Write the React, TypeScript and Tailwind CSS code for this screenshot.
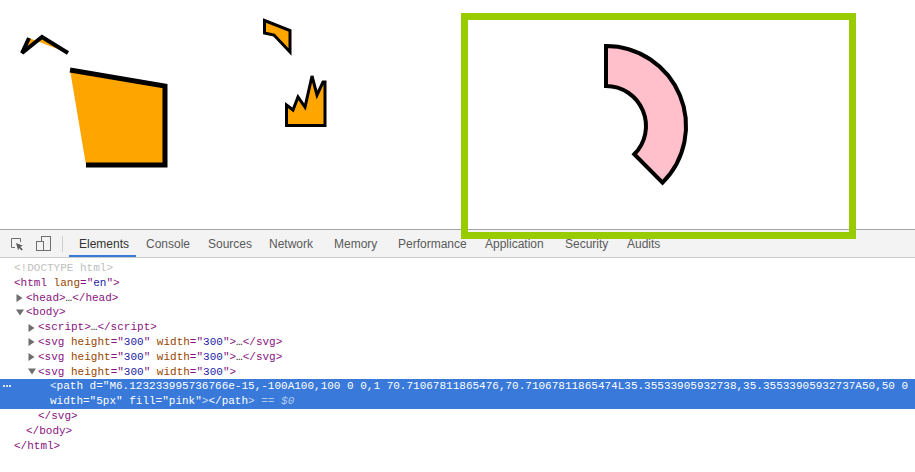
import React from "react";

const Tg = ({ c }: { c: string }) => <span className="text-[#881280]">{c}</span>;
const An = ({ c }: { c: string }) => <span className="text-[#994500]">{c}</span>;
const Av = ({ c }: { c: string }) => <span className="text-[#1a1aa6]">{c}</span>;
const Ell = () => <span className="text-[#222]">…</span>;

const ArrowRight = () => (
  <span className="inline-flex w-[10px] h-[14.8px] items-center">
    <svg width="7" height="8" viewBox="0 0 7 8">
      <path d="M0.5 0 L6.5 4 L0.5 8 Z" fill="#6e6e6e" />
    </svg>
  </span>
);
const ArrowDown = () => (
  <span className="inline-flex w-[10px] h-[14.8px] items-center">
    <svg width="8" height="7" viewBox="0 0 8 7">
      <path d="M0 0.5 L8 0.5 L4 6.5 Z" fill="#6e6e6e" />
    </svg>
  </span>
);

const SvgOpen = () => (
  <>
    <Tg c="<svg" />
    <An c=" height" />
    <Tg c='="' />
    <Av c="300" />
    <Tg c='"' />
    <An c=" width" />
    <Tg c='="' />
    <Av c="300" />
    <Tg c='">' />
  </>
);

const tabs: { name: string; w: string; active?: boolean }[] = [
  { name: "Elements", w: "w-[67px]", active: true },
  { name: "Console", w: "w-[62px]" },
  { name: "Sources", w: "w-[61px]" },
  { name: "Network", w: "w-[65px]" },
  { name: "Memory", w: "w-[64px]" },
  { name: "Performance", w: "w-[87px]" },
  { name: "Application", w: "w-[80px]" },
  { name: "Security", w: "w-[62px]" },
  { name: "Audits", w: "w-[57px]" },
];

export default function App() {
  return (
    <div className="relative w-[915px] h-[472px] bg-white overflow-hidden flex flex-col">
      {/* page canvas */}
      <div className="relative h-[229px] shrink-0">
        <svg
          className="absolute left-0 top-0 z-10 overflow-visible"
          width="915"
          height="245"
          viewBox="0 0 915 245"
        >
          <path
            d="M29,38 L22,53 L42,37 L68,53"
            fill="orange"
            stroke="black"
            strokeWidth="4"
          />
          <path
            d="M70,70 L165,86 L165,165 L86,165"
            fill="orange"
            stroke="black"
            strokeWidth="5"
          />
          <path
            d="M264.5,20.5 L290,30.5 L290,52 L274,35 L264.5,33 Z"
            fill="orange"
            stroke="black"
            strokeWidth="3"
          />
          <path
            d="M286.5,105 L293,110 L298,97 L305,107 L312,76 L317,95 L323,82 L325,82 L325,125.5 L286.5,125.5 Z"
            fill="orange"
            stroke="black"
            strokeWidth="3"
          />
          <rect
            x="464.5"
            y="16.5"
            width="388"
            height="219"
            fill="none"
            stroke="#99cc00"
            strokeWidth="7"
          />
          <path
            d="M606,46 A80,80 0 0,1 662.57,182.57 L634.28,154.28 A40,40 0 0,0 606,86 Z"
            fill="pink"
            stroke="black"
            strokeWidth="4"
          />
        </svg>
      </div>

      {/* devtools */}
      <div className="flex-1 flex flex-col border-t border-[#a3a3a3]">
        <div className="h-[28px] shrink-0 flex items-stretch bg-[#f3f3f3] border-b border-[#cbcbcb] font-['Liberation_Sans',Arial,sans-serif] text-[12px]">
          <div className="flex items-center pl-[10px]">
            <svg width="14" height="14" viewBox="0 0 14 14">
              <path d="M5 10.5 H1.5 V1.5 H10.5 V5" fill="none" stroke="#6e6e6e" strokeWidth="1" />
              <path d="M6 6 L13 8.8 L10.2 9.8 L12.8 12.4 L11.6 13.6 L9 11 L8.2 13.6 Z" fill="#5a5a5a" />
            </svg>
            <svg className="ml-[12px]" width="15" height="15" viewBox="0 0 15 15">
              <rect x="5.5" y="0.5" width="9" height="14" fill="none" stroke="#6e6e6e" strokeWidth="1" />
              <rect x="0.5" y="5.5" width="7" height="9" fill="#f3f3f3" stroke="#6e6e6e" strokeWidth="1" />
            </svg>
            <div className="ml-[11px] w-px h-[16px] bg-[#cfcfcf]" />
          </div>
          <div className="flex ml-[6px] items-stretch">
            {tabs.map((t) => (
              <div
                key={t.name}
                className={
                  t.w +
                  " shrink-0 pl-[10px] flex items-center whitespace-nowrap " +
                  (t.active
                    ? "border-b-2 border-[#3879d9] text-[#333] pt-[2px]"
                    : "text-[#5a5a5a]")
                }
              >
                {t.name}
              </div>
            ))}
          </div>
        </div>

        <div className="flex-1 bg-white pt-[3px] font-['Liberation_Mono',monospace] text-[11px] leading-[14.8px] whitespace-pre">
          <div className="pl-[14px] text-[#c0c0c0]">{"<!DOCTYPE html>"}</div>
          <div className="pl-[14px]">
            <Tg c="<html" />
            <An c=" lang" />
            <Tg c='="' />
            <Av c="en" />
            <Tg c='">' />
          </div>
          <div className="pl-[16px] flex">
            <ArrowRight />
            <span>
              <Tg c="<head>" />
              <Ell />
              <Tg c="</head>" />
            </span>
          </div>
          <div className="pl-[16px] flex">
            <ArrowDown />
            <span>
              <Tg c="<body>" />
            </span>
          </div>
          <div className="pl-[28px] flex">
            <ArrowRight />
            <span>
              <Tg c="<script>" />
              <Ell />
              <Tg c="</script>" />
            </span>
          </div>
          <div className="pl-[28px] flex">
            <ArrowRight />
            <span>
              <SvgOpen />
              <Ell />
              <Tg c="</svg>" />
            </span>
          </div>
          <div className="pl-[28px] flex">
            <ArrowRight />
            <span>
              <SvgOpen />
              <Ell />
              <Tg c="</svg>" />
            </span>
          </div>
          <div className="pl-[28px] flex">
            <ArrowDown />
            <span>
              <SvgOpen />
            </span>
          </div>
          <div className="bg-[#3879d9] text-white">
            <div className="relative pl-[50px]">
              <span className="absolute left-[3px] top-[6px] flex gap-[1px]">
                <span className="w-[2px] h-[2px] bg-white/80" />
                <span className="w-[2px] h-[2px] bg-white/80" />
                <span className="w-[2px] h-[2px] bg-white/80" />
              </span>
              <span className="text-white/85">{"<"}</span>
              {'path d="M6.123233995736766e-15,-100A100,100 0 0,1 70.71067811865476,70.71067811865474L35.35533905932738,35.35533905932737A50,50 0'}
            </div>
            <div className="pl-[50px]">
              {'width="5px" fill="pink"'}
              <span className="text-white/75">{">"}</span>
              {"</path"}
              <span className="text-white/75">{">"}</span>
              <span className="text-white/60">{" == "}</span>
              <span className="text-white/60 italic">{"$0"}</span>
            </div>
          </div>
          <div className="pl-[38px]">
            <Tg c="</svg>" />
          </div>
          <div className="pl-[26px]">
            <Tg c="</body>" />
          </div>
          <div className="pl-[14px]">
            <Tg c="</html>" />
          </div>
        </div>
      </div>
    </div>
  );
}
